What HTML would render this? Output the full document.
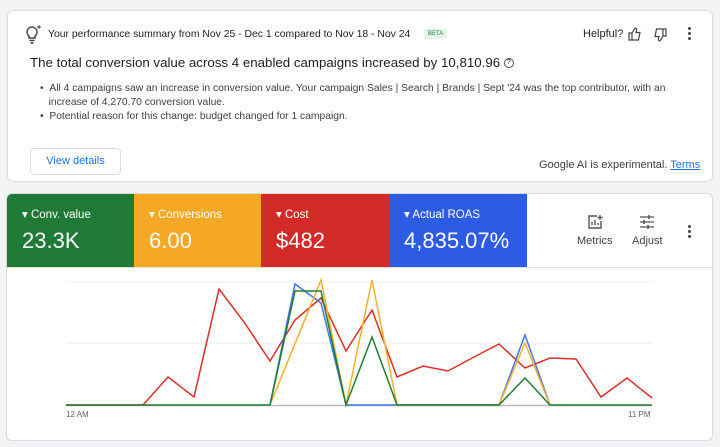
<!DOCTYPE html>
<html><head><style>
body{margin:0;width:720px;height:447px;background:#f1f3f4;font-family:"Liberation Sans",sans-serif;position:relative;overflow:hidden;color:#202124}
.card{position:absolute;background:#fff;border:1px solid #dadce0;border-radius:6px;box-sizing:border-box}
.a{position:absolute;white-space:nowrap}
.tile{position:absolute;top:0;height:73px;color:#fff}
.tile .l{position:absolute;left:15px;top:13px;font-size:11.5px}
.tile .v{position:absolute;left:15px;top:34px;font-size:22px}
</style></head><body>
<div class="card" style="left:7px;top:10px;width:706px;height:172px">
<svg class="a" style="left:16px;top:13px" width="20" height="22" viewBox="0 0 20 22"><path d="M8 3a5 5 0 0 0-3 9v2h6v-2a5 5 0 0 0-3-9z" fill="none" stroke="#444" stroke-width="1.5"/><path d="M5.5 16.5h5M6.5 19h3" stroke="#444" stroke-width="1.5"/><path d="M15 1v4M13 3h4" stroke="#444" stroke-width="1"/></svg>
<div class="a" style="left:40px;top:18px;font-size:10.4px;color:#202124">Your performance summary from Nov 25 - Dec 1 compared to Nov 18 - Nov 24</div>
<div class="a" style="left:416px;top:18px;font-size:6px;background:#e6f4ea;color:#188038;padding:2px 4px">BETA</div>
<div class="a" style="left:575px;top:17px;font-size:11px">Helpful?</div>
<svg class="a" style="left:620px;top:16px" width="14" height="14" viewBox="0 0 14 14"><path d="M1 6h3v7H1zM4 6l3-5c1 0 2 1 1.5 2.5L8 5.5h4l-1.5 7.5H4" fill="none" stroke="#444" stroke-width="1.2"/></svg>
<svg class="a" style="left:645px;top:17px" width="14" height="14" viewBox="0 0 14 14"><g transform="rotate(180 7 7)"><path d="M1 6h3v7H1zM4 6l3-5c1 0 2 1 1.5 2.5L8 5.5h4l-1.5 7.5H4" fill="none" stroke="#444" stroke-width="1.2"/></g></svg>
<div class="a" style="left:680px;top:16px;width:3px"><div style="width:3px;height:3px;background:#444;border-radius:50%;margin-bottom:2px"></div><div style="width:3px;height:3px;background:#444;border-radius:50%;margin-bottom:2px"></div><div style="width:3px;height:3px;background:#444;border-radius:50%"></div></div>
<div class="a" style="left:22px;top:44px;font-size:13.3px">The total conversion value across 4 enabled campaigns increased by 10,810.96 <span style="border:1px solid #555;border-radius:50%;display:inline-block;width:8px;height:8px;line-height:8px;text-align:center;font-size:7px;vertical-align:3px">?</span></div>
<div class="a" style="left:32px;top:71px;font-size:10.3px;color:#3c4043;line-height:14px;white-space:normal;width:670px">• &nbsp;All 4 campaigns saw an increase in conversion value. Your campaign Sales | Search | Brands | Sept '24 was the top contributor, with an<br>&nbsp;&nbsp;&nbsp;increase of 4,270.70 conversion value.<br>• &nbsp;Potential reason for this change: budget changed for 1 campaign.</div>
<div class="a" style="left:22px;top:137px;width:89px;height:25px;border:1px solid #dadce0;border-radius:4px;color:#1a73e8;font-size:11px;text-align:center;line-height:25px">View details</div>
<div class="a" style="left:531px;top:148px;font-size:11px;color:#3c4043">Google AI is experimental. <span style="color:#1a73e8;text-decoration:underline">Terms</span></div>
</div>
<div class="card" style="left:6px;top:193px;width:707px;height:248px;overflow:hidden">
<div class="tile" style="left:0;width:127px;background:#1e7a34"><div class="l">▾ Conv. value</div><div class="v">23.3K</div></div>
<div class="tile" style="left:127px;width:127px;background:#f4a824"><div class="l">▾ Conversions</div><div class="v">6.00</div></div>
<div class="tile" style="left:254px;width:128px;background:#d22a27"><div class="l">▾ Cost</div><div class="v">$482</div></div>
<div class="tile" style="left:382px;width:138px;background:#2d5be3"><div class="l">▾ Actual ROAS</div><div class="v">4,835.07%</div></div>
<div class="a" style="left:0;top:73px;width:707px;height:1px;background:#e0e0e0"></div>
<svg class="a" style="left:580px;top:20px" width="16" height="16" viewBox="0 0 16 16"><path d="M10 2H2v12h12V7" fill="none" stroke="#555" stroke-width="1.4"/><path d="M5 11V8M8 11V6M11 11V9M13 1v5M10.5 3.5h5" stroke="#555" stroke-width="1.4"/></svg>
<div class="a" style="left:570px;top:41px;font-size:11px;color:#3c4043">Metrics</div>
<svg class="a" style="left:632px;top:21px" width="16" height="14" viewBox="0 0 16 14"><path d="M1 2h14M1 7h14M1 12h14" stroke="#555" stroke-width="1.3"/><path d="M10 0v4M5 5v4M9 10v4" stroke="#555" stroke-width="1.6"/></svg>
<div class="a" style="left:625px;top:41px;font-size:11px;color:#3c4043">Adjust</div>
<div class="a" style="left:681px;top:31px"><div style="width:3px;height:3px;background:#444;border-radius:50%;margin-bottom:2px"></div><div style="width:3px;height:3px;background:#444;border-radius:50%;margin-bottom:2px"></div><div style="width:3px;height:3px;background:#444;border-radius:50%"></div></div>
</div>
<svg class="a" style="left:0;top:0" width="720" height="447">
<path d="M66 282H652M66 343H652" stroke="#eee" stroke-width="1"/>
<path d="M66 405.5H652" stroke="#bbb" stroke-width="1.5"/>
<polyline fill="none" stroke="#d93025" stroke-width="1.5" points="66,405 143,405 168,377 194,397 219,289 244,322 270,361 295,320 321,298 346,351 372,310 397,377 423,366 448,371 474,357 499,344 525,368 550,358 576,359 601,397 627,378 652,398"/>
<polyline fill="none" stroke="#4273e8" stroke-width="1.5" points="270,405 295,284 321,303 346,405 499,405 525,335 550,405"/>
<polyline fill="none" stroke="#f4b02a" stroke-width="1.5" points="270,405 321,280 346,405 372,280 397,405 499,405 525,343 550,405"/>
<polyline fill="none" stroke="#1e7e34" stroke-width="1.5" points="66,405 270,405 295,291 321,291 346,405 372,337 397,405 499,405 525,378 550,405 652,405"/>
<text x="66" y="417" font-size="8" fill="#666" font-family="Liberation Sans">12 AM</text>
<text x="628" y="417" font-size="8" fill="#666" font-family="Liberation Sans">11 PM</text>
</svg>
</body></html>
